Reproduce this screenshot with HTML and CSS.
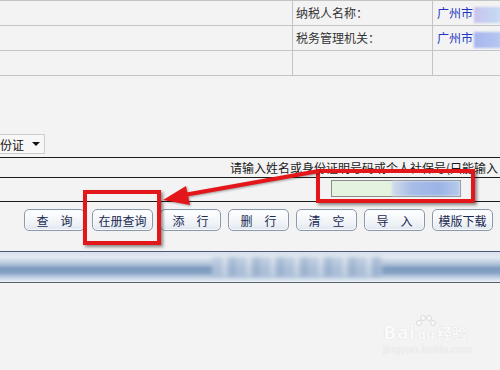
FILE: index.html
```html
<!DOCTYPE html>
<html lang="zh-CN">
<head>
    <meta charset="UTF-8">
    <title>在册查询</title>
    <link rel="stylesheet" href="styles.css">
</head>
<body>
    <div class="info">
        <div class="cell"></div>
        <div class="cell label">纳税人名称：</div>
        <div class="cell value">广州市<span class="masked m1"></span></div>
        <div class="cell"></div>
        <div class="cell label">税务管理机关：</div>
        <div class="cell value">广州市<span class="masked m2"></span></div>
        <div class="cell"></div>
        <div class="cell"></div>
        <div class="cell value"></div>
    </div>

    <div class="filter">
        <div class="select"><span>份证</span><span class="caret"></span></div>
    </div>

    <div class="query">
        <div class="hint">请输入姓名或身份证明号码或个人社保号(只能输入</div>
        <div class="input-row">
            <div class="field"><span class="field-val"></span></div>
        </div>
    </div>

    <div class="buttons">
        <button class="btn">查　询</button>
        <button class="btn">在册查询</button>
        <button class="btn">添　行</button>
        <button class="btn">删　行</button>
        <button class="btn">清　空</button>
        <button class="btn">导　入</button>
        <button class="btn">模版下载</button>
    </div>

    <div class="bar"><span class="bar-text"></span></div>

    <!-- annotations drawn over the page -->
    <div class="mark mark-input"></div>
    <div class="mark mark-btn"></div>
    <svg class="arrow" width="500" height="370" viewBox="0 0 500 370">
        <line x1="184" y1="195" x2="319" y2="171" stroke="#e3161a" stroke-width="4"/>
        <polygon points="163,200 186,186 190,205" fill="#e3161a"/>
    </svg>

    <div class="watermark">
        <div class="wm-top">
            <span class="wm-bai">Bai</span>
            <span class="wm-paw">
                <svg width="22" height="14" viewBox="0 0 22 14">
                    <circle cx="4" cy="9" r="2.5"/>
                    <circle cx="8" cy="4" r="2.5"/>
                    <circle cx="14" cy="4" r="2.5"/>
                    <circle cx="18" cy="9" r="2.5"/>
                </svg>
                <span class="wm-du">du</span>
            </span>
            <span class="wm-jy">经验</span>
        </div>
        <div class="wm-url">jingyan.baidu.com</div>
    </div>
</body>
</html>
```

FILE: styles.css
```css
* {
    box-sizing: border-box;
}
body {
    margin: 0;
    width: 500px;
    height: 370px;
    overflow: hidden;
    position: relative;
    background-color: #f3f3f3;
    font-family: "Noto Sans CJK SC", "DejaVu Sans", sans-serif;
    font-size: 12px;
    color: #222;
}
.info {
    display: grid;
    grid-template-columns: 293px 140px 1fr;
    border-top: 1px solid #c4c4c4;
}
.cell {
    height: 25px;
    line-height: 24px;
    border-bottom: 1px solid #c4c4c4;
    white-space: nowrap;
    overflow: hidden;
}
.cell:nth-child(3n+1),
.cell:nth-child(3n+2) {
    border-right: 1px solid #c4c4c4;
}
.label {
    padding-left: 3px;
    color: #333;
}
.value {
    padding-left: 4px;
    color: #2236c4;
}
.masked {
    display: inline-block;
    vertical-align: middle;
    width: 34px;
    height: 16px;
    margin-left: 1px;
    filter: blur(1px);
}
.m1 {
    background: linear-gradient(to right, #c9c4ee, #c4d6f2 60%, #d8e4f4);
}
.m2 {
    background: linear-gradient(to right, #a8b6ee, #b2c2f0 60%, #c6d2f2);
}
.filter {
    margin-top: 58px;
    margin-bottom: 3px;
    height: 20px;
}
.select {
    display: inline-flex;
    align-items: center;
    height: 20px;
    margin-left: -22px;
    padding-left: 21px;
    padding-right: 4px;
    border: 1px solid #cdcdcd;
    background-color: #f7f7f7;
    color: #111;
}
.caret {
    width: 0;
    height: 0;
    margin-left: 8px;
    border-left: 4px solid transparent;
    border-right: 4px solid transparent;
    border-top: 4px solid #111;
}
.query {
    border-top: 1px solid #1c1c1c;
}
.hint {
    height: 20px;
    line-height: 19px;
    padding-left: 230px;
    white-space: nowrap;
    overflow: hidden;
    border-bottom: 1px solid #1c1c1c;
    color: #1a1a1a;
}
.input-row {
    display: flex;
    justify-content: flex-end;
    height: 24px;
    padding-top: 2px;
    padding-right: 39px;
    border-bottom: 1px solid #1c1c1c;
}
.field {
    display: flex;
    justify-content: flex-end;
    align-items: center;
    width: 130px;
    height: 17px;
    border: 1px solid #8c8c8c;
    background-color: #e4f2e0;
}
.field-val {
    width: 68px;
    height: 15px;
    background: linear-gradient(to right, #d2dcea, #a6bce6 30%, #9cb4e6 70%, #b8caec);
    filter: blur(1px);
}
.buttons {
    display: flex;
    gap: 7px;
    margin-top: 7px;
    padding-left: 24px;
}
.btn {
    width: 61px;
    height: 22px;
    padding: 0;
    border: 1px solid #8a98ac;
    border-radius: 5px;
    background: linear-gradient(to bottom, #ffffff, #eef2f6 70%, #dfe6ee);
    box-shadow: inset 0 0 0 1px #f8fafc;
    font-family: inherit;
    font-size: 12px;
    color: #1a2a52;
    cursor: pointer;
}
.bar {
    margin-top: 20px;
    height: 32px;
    padding-top: 5px;
    border-top: 1px solid #4c5a78;
    border-bottom: 1px solid #58626e;
    background: linear-gradient(to bottom, #d8e1ec 0%, #e3e9f1 18%, #b6c7db 38%, #7f9bc0 55%, #84a0c4 68%, #c4d2e3 86%, #edf1f7 100%);
}
.bar-text {
    display: block;
    width: 170px;
    height: 19px;
    margin-left: 212px;
    background: repeating-linear-gradient(to right, #b9c9de 0, #b9c9de 10px, #d6e0ec 10px, #d6e0ec 16px, #a4b8d3 16px, #a4b8d3 24px);
    filter: blur(2px);
    opacity: 0.8;
}
.mark {
    position: absolute;
    border: 4px solid #e3161a;
    box-shadow: 2px 2px 3px rgba(0, 0, 0, 0.45);
}
.mark-input {
    left: 316px;
    top: 169px;
    width: 159px;
    height: 34px;
}
.mark-btn {
    left: 83px;
    top: 190px;
    width: 78px;
    height: 55px;
}
.arrow {
    position: absolute;
    left: 0;
    top: 0;
    pointer-events: none;
    filter: drop-shadow(1px 1px 1px rgba(0, 0, 0, 0.35));
}
.watermark {
    position: absolute;
    left: 383px;
    top: 314px;
    color: #fafafa;
    text-shadow: 0 0 1px #d0d0d0;
    font-family: "DejaVu Sans", sans-serif;
}
.wm-top {
    display: flex;
    align-items: flex-end;
}
.wm-bai {
    font-size: 18px;
    font-weight: bold;
    line-height: 18px;
}
.wm-paw {
    display: flex;
    flex-direction: column;
    align-items: center;
    width: 22px;
}
.wm-paw svg {
    fill: #fafafa;
    stroke: #d2d2d2;
    stroke-width: 0.8;
}
.wm-du {
    font-size: 12px;
    font-weight: bold;
    line-height: 14px;
}
.wm-jy {
    font-family: "Noto Sans CJK SC", sans-serif;
    font-size: 15px;
    font-weight: bold;
    line-height: 18px;
}
.wm-url {
    margin-top: 2px;
    font-size: 10px;
    letter-spacing: -0.2px;
    color: #f0f0f0;
    text-shadow: 0 0 1px #dcdcdc;
}
```
